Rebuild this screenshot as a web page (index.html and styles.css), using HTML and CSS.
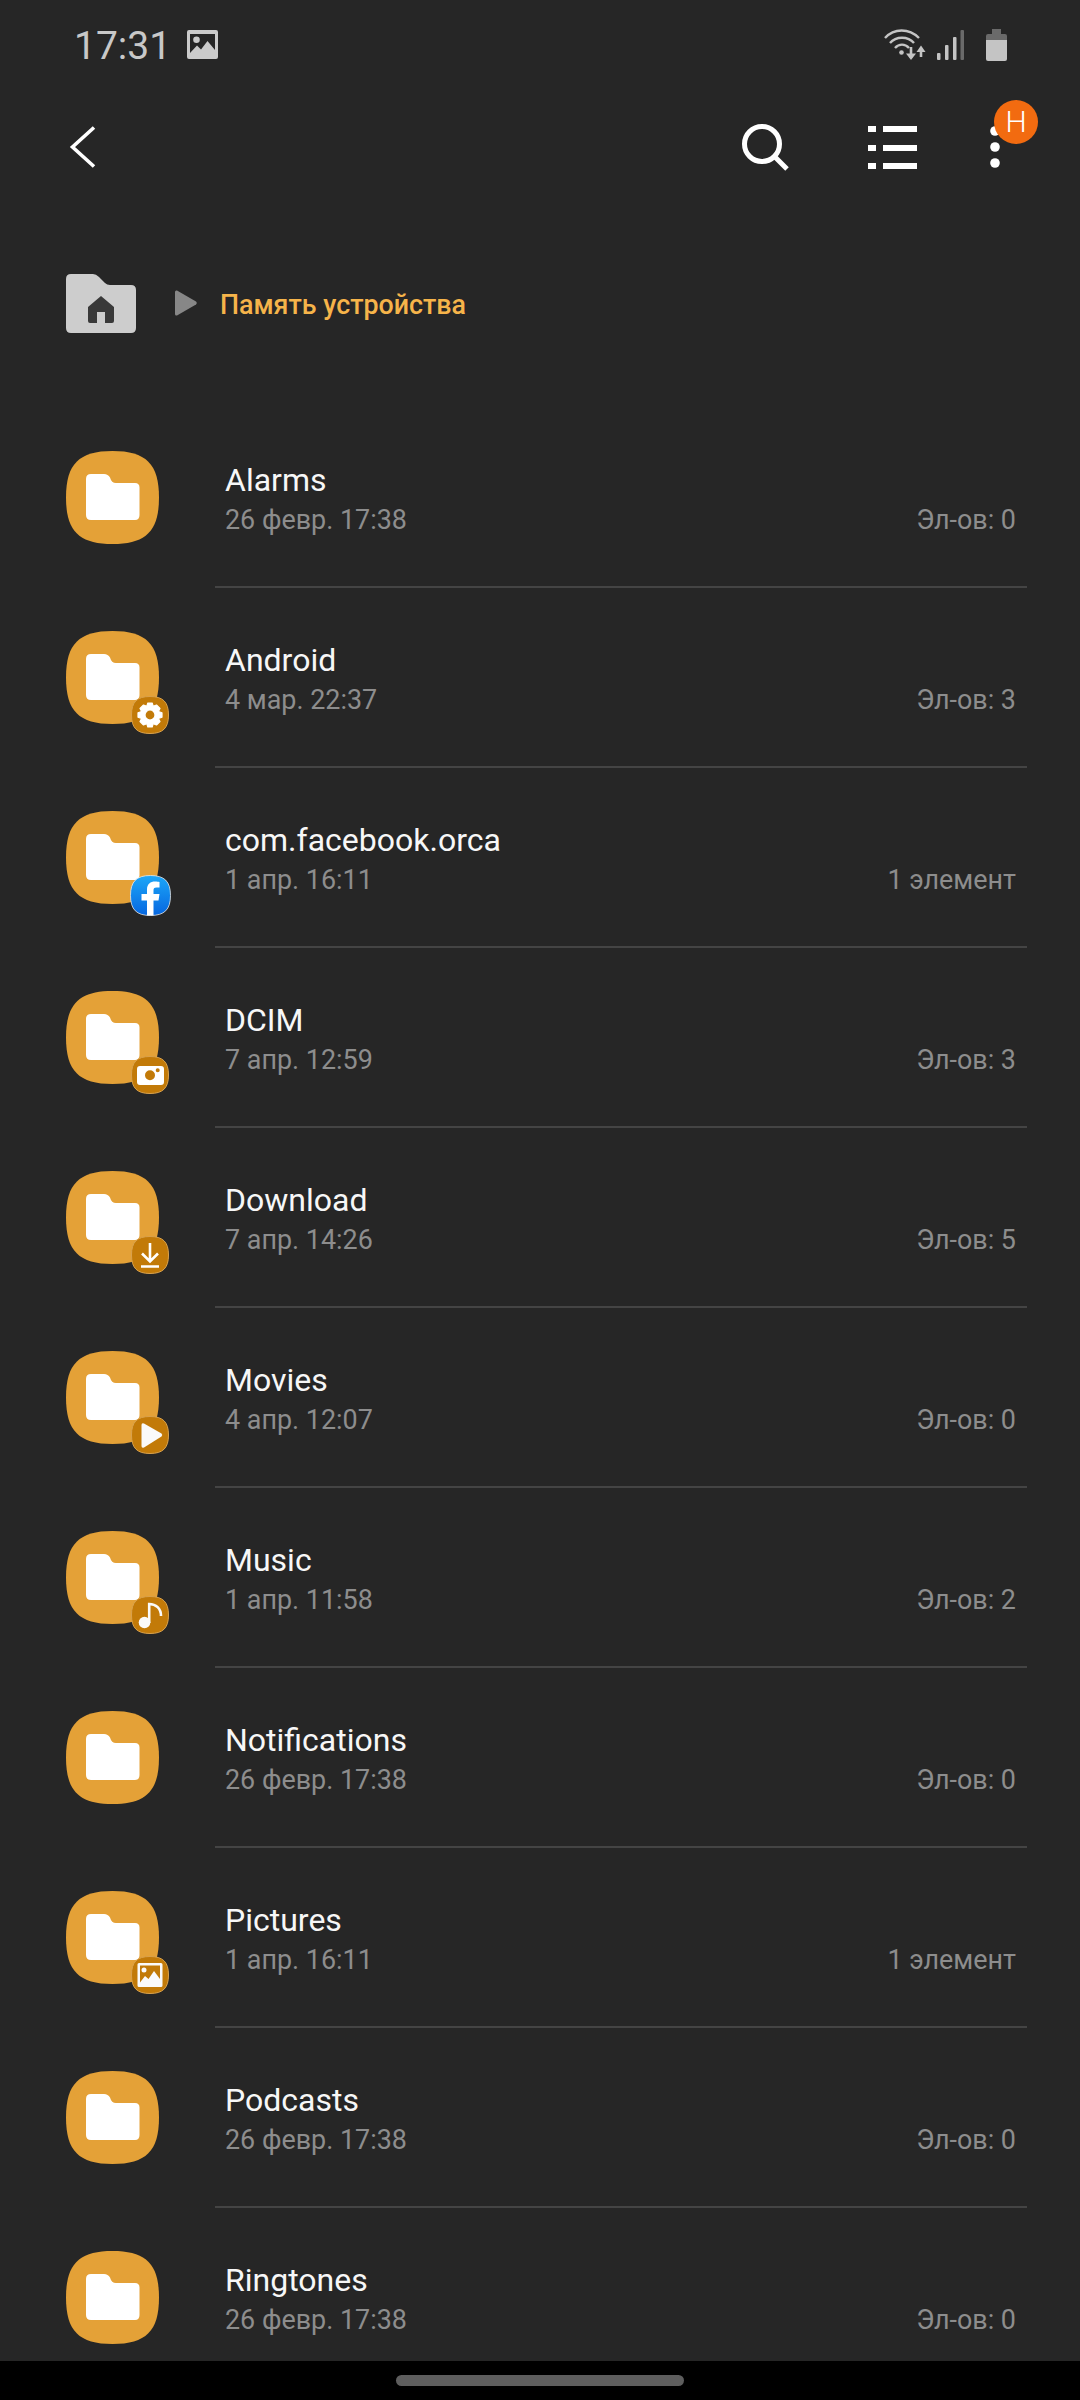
FILE: index.html
```html
<!DOCTYPE html>
<html lang="ru">
<head>
<meta charset="utf-8">
<title>Память устройства</title>
<link rel="stylesheet" href="styles.css">
</head>
<body>
<svg class="defs" width="0" height="0" aria-hidden="true">
  <symbol id="folder" viewBox="0 0 93 93">
    <path fill="#e4a137" d="M46.500 0C80 0 93 13 93 46.500C93 80 80 93 46.500 93C13 93 0 80 0 46.500C0 13 13 0 46.500 0Z"/>
    <path fill="#fff" d="M25 23H38Q42 23 44 26.500Q45.500 32 50 32H69Q73.500 32 73.500 36.500V64Q73.500 69 69 69H25Q20 69 20 64V28Q20 23 25 23Z"/>
  </symbol>
  <symbol id="chip" viewBox="0 0 38 38">
    <path fill="#c27a08" stroke="#d9a24e" stroke-width="1" d="M19 .5C32 .5 37.500 6 37.500 19C37.500 32 32 37.500 19 37.500C6 37.500 .5 32 .5 19C.5 6 6 .5 19 .5Z"/>
  </symbol>
</svg>
<div class="page">
  <header class="status">
    <span class="time">17:31</span>
    <svg class="st-img" viewBox="0 0 31 29"><path fill="#cbcbcb" fill-rule="evenodd" d="M2 0H29Q31 0 31 2V27Q31 29 29 29H2Q0 29 0 27V2Q0 0 2 0ZM9.500 6.500A3.300 3.300 0 1 0 9.500 13.100A3.300 3.300 0 1 0 9.500 6.500ZM3 23L10 15.500L14 19.500L20.500 11L28 20V4H3Z"/></svg>
    <span class="st-right">
      <svg class="st-wifi" viewBox="0 0 42 32" fill="none" stroke="#c4c4c4">
        <path stroke-width="2.400" d="M1 9C10 -1 25 -1 35 9"/>
        <path stroke-width="2.400" d="M6 14C12 7 24 7 30 14"/>
        <path stroke-width="2.400" d="M11 19C15 14.500 21 14.500 25 19"/>
        <circle cx="17.500" cy="23.500" r="2.300" fill="#c4c4c4" stroke="none"/>
        <path stroke-width="2.600" d="M27 18V29"/>
        <path fill="#c4c4c4" stroke="none" d="M22 24.500H32L27 31Z"/>
        <path stroke-width="2.600" d="M37 28V19"/>
        <path fill="#c4c4c4" stroke="none" d="M32.500 23H41.500L37 16.500Z"/>
      </svg>
      <svg class="st-signal" viewBox="0 0 27 30">
        <rect x="0" y="23" width="3.500" height="7" rx="1" fill="#c4c4c4"/>
        <rect x="8" y="15" width="3.500" height="15" rx="1" fill="#c4c4c4"/>
        <rect x="16" y="7" width="3.500" height="23" rx="1" fill="#c4c4c4"/>
        <rect x="23.500" y="0" width="3.500" height="30" rx="1" fill="#6a6a6a"/>
      </svg>
      <svg class="st-batt" viewBox="0 0 21 32">
        <path fill="#6a6a6a" d="M6 0H15V5H19Q21 5 21 7V11H0V7Q0 5 2 5H6Z"/>
        <path fill="#c4c4c4" d="M0 11H21V30Q21 32 19 32H2Q0 32 0 30Z"/>
      </svg>
    </span>
  </header>

  <nav class="toolbar">
    <svg class="tb-back" viewBox="0 0 30 46" fill="none" stroke="#fff" stroke-width="3.600"><path d="M26 3.500L4.500 23L26 42.500"/></svg>
    <svg class="tb-search" viewBox="0 0 48 48" fill="none" stroke="#fff" stroke-width="5"><circle cx="21" cy="21" r="17.500"/><path d="M33.500 33.500L46 46"/></svg>
    <svg class="tb-list" viewBox="0 0 49 44" fill="#fff">
      <rect x="0" y="1" width="8" height="6"/><rect x="15" y="1" width="34" height="6"/>
      <rect x="0" y="20" width="8" height="6"/><rect x="15" y="20" width="34" height="6"/>
      <rect x="0" y="38" width="8" height="6"/><rect x="15" y="38" width="34" height="6"/>
    </svg>
    <span class="tb-more">
      <svg class="tb-dots" viewBox="0 0 10 44" fill="#fff"><circle cx="5" cy="6" r="4.800"/><circle cx="5" cy="22" r="4.800"/><circle cx="5" cy="38" r="4.800"/></svg>
      <span class="tb-badge">Н</span>
    </span>
  </nav>

  <div class="crumbs">
    <svg class="crumb-home" viewBox="0 0 70 59"><path fill="#cdcdcd" d="M5 0H27Q30 0 33 3L39 9Q41 11 44 11H65Q70 11 70 16V54Q70 59 65 59H5Q0 59 0 54V5Q0 0 5 0Z"/><path fill="#393939" d="M35 22L48 33V47Q48 49 46 49H39V38H31V49H24Q22 49 22 47V33Z"/></svg>
    <svg class="crumb-arrow" viewBox="0 0 22 26"><path fill="#878787" d="M0 2Q0 0 2 .5L21 11.500Q22.500 13 21 14.500L2 25.500Q0 26 0 24Z"/></svg>
    <span class="crumb-text">Память устройства</span>
  </div>

  <main class="list">
    <div class="row">
      <span class="icon"><svg class="icon-folder"><use href="#folder"/></svg></span>
      <div class="body"><div class="name">Alarms</div><div class="sub"><span>26 февр. 17:38</span><span>Эл-ов: 0</span></div></div>
    </div>
    <div class="row">
      <span class="icon"><svg class="icon-folder"><use href="#folder"/></svg>
        <svg class="chip" viewBox="0 0 38 38"><use href="#chip"/><path fill="#fff" stroke="#fff" stroke-width="1.200" stroke-linejoin="round" fill-rule="evenodd" d="M16.800 7H21.200L22.200 10.300L25.500 9L29 12.500L27.400 15.500L31 16.800V21.200L27.400 22.500L29 25.500L25.500 29L22.200 27.700L21.200 31H16.800L15.800 27.700L12.500 29L9 25.500L10.600 22.500L7 21.200V16.800L10.600 15.500L9 12.500L12.500 9L15.800 10.300ZM19 14A5 5 0 1 0 19 24A5 5 0 1 0 19 14Z"/></svg>
      </span>
      <div class="body"><div class="name">Android</div><div class="sub"><span>4 мар. 22:37</span><span>Эл-ов: 3</span></div></div>
    </div>
    <div class="row">
      <span class="icon"><svg class="icon-folder"><use href="#folder"/></svg>
        <svg class="chip chip-fb" viewBox="0 0 41 41"><defs><linearGradient id="fb" x1="0" y1="0" x2="0" y2="1"><stop offset="0" stop-color="#1ca7f8"/><stop offset="1" stop-color="#0666e0"/></linearGradient></defs><path fill="url(#fb)" stroke="#e8e8e8" stroke-width=".8" d="M20.500.5C34.500.5 40.500 6.500 40.500 20.500C40.500 34.500 34.500 40.500 20.500 40.500C6.500 40.500 .5 34.500 .5 20.500C.5 6.500 6.500.5 20.500.5Z"/><path fill="#fff" d="M17 40.500V25.500H11.500V19H17V14.500C17 9 20.500 6.500 25 6.500C27 6.500 28.500 6.800 29.500 7V12.500H26.500C24 12.500 23.500 13.500 23.500 15.500V19H29.500L28.500 25.500H23.500V40.500Z"/></svg>
      </span>
      <div class="body"><div class="name">com.facebook.orca</div><div class="sub"><span>1 апр. 16:11</span><span>1 элемент</span></div></div>
    </div>
    <div class="row">
      <span class="icon"><svg class="icon-folder"><use href="#folder"/></svg>
        <svg class="chip" viewBox="0 0 38 38"><use href="#chip"/><path fill="#fff" fill-rule="evenodd" d="M9 10H30Q33 10 33 13V26Q33 29 30 29H9Q6 29 6 26V13Q6 10 9 10ZM19 14.300A5 5 0 1 0 19 24.300A5 5 0 1 0 19 14.300ZM26.700 12.300A2 2 0 1 0 26.700 16.300A2 2 0 1 0 26.700 12.300Z"/></svg>
      </span>
      <div class="body"><div class="name">DCIM</div><div class="sub"><span>7 апр. 12:59</span><span>Эл-ов: 3</span></div></div>
    </div>
    <div class="row">
      <span class="icon"><svg class="icon-folder"><use href="#folder"/></svg>
        <svg class="chip" viewBox="0 0 38 38"><use href="#chip"/><path fill="none" stroke="#fff" stroke-width="2.600" d="M19 7V25M11 17.500L19 25.500L27 17.500M10 30.500H28"/></svg>
      </span>
      <div class="body"><div class="name">Download</div><div class="sub"><span>7 апр. 14:26</span><span>Эл-ов: 5</span></div></div>
    </div>
    <div class="row">
      <span class="icon"><svg class="icon-folder"><use href="#folder"/></svg>
        <svg class="chip" viewBox="0 0 38 38"><use href="#chip"/><path fill="#fafafa" d="M10.500 9Q10.500 6.500 13 7.500L30.500 17.500Q32 19 30.500 20.500L13 31.500Q10.500 32.500 10.500 30Z"/></svg>
      </span>
      <div class="body"><div class="name">Movies</div><div class="sub"><span>4 апр. 12:07</span><span>Эл-ов: 0</span></div></div>
    </div>
    <div class="row">
      <span class="icon"><svg class="icon-folder"><use href="#folder"/></svg>
        <svg class="chip" viewBox="0 0 38 38"><use href="#chip"/><circle cx="13.500" cy="26.500" r="5.800" fill="#fafafa"/><path fill="none" stroke="#fafafa" stroke-width="2.600" d="M18.200 27V8C25 8 30 12.500 30 20"/></svg>
      </span>
      <div class="body"><div class="name">Music</div><div class="sub"><span>1 апр. 11:58</span><span>Эл-ов: 2</span></div></div>
    </div>
    <div class="row">
      <span class="icon"><svg class="icon-folder"><use href="#folder"/></svg></span>
      <div class="body"><div class="name">Notifications</div><div class="sub"><span>26 февр. 17:38</span><span>Эл-ов: 0</span></div></div>
    </div>
    <div class="row">
      <span class="icon"><svg class="icon-folder"><use href="#folder"/></svg>
        <svg class="chip" viewBox="0 0 38 38"><use href="#chip"/><path fill="#fafafa" fill-rule="evenodd" d="M8 7H30Q31.500 7 31.500 8.500V29.500Q31.500 31 30 31H8Q6.500 31 6.500 29.500V8.500Q6.500 7 8 7ZM13 11.500A2.500 2.500 0 1 0 13 16.500A2.500 2.500 0 1 0 13 11.500ZM9 26.500L14 20L17.500 23L23 15L29 23V9.500H9Z"/></svg>
      </span>
      <div class="body"><div class="name">Pictures</div><div class="sub"><span>1 апр. 16:11</span><span>1 элемент</span></div></div>
    </div>
    <div class="row">
      <span class="icon"><svg class="icon-folder"><use href="#folder"/></svg></span>
      <div class="body"><div class="name">Podcasts</div><div class="sub"><span>26 февр. 17:38</span><span>Эл-ов: 0</span></div></div>
    </div>
    <div class="row">
      <span class="icon"><svg class="icon-folder"><use href="#folder"/></svg></span>
      <div class="body"><div class="name">Ringtones</div><div class="sub"><span>26 февр. 17:38</span><span>Эл-ов: 0</span></div></div>
    </div>
  </main>

  <footer class="navbar"><span class="handle"></span></footer>
</div>
</body>
</html>
```

FILE: styles.css
```css
* { box-sizing: border-box; }
html, body { margin: 0; padding: 0; }
body { background: #262626; font-family: Roboto, "Noto Sans", sans-serif; color: #f5f5f5; }
svg { display: block; flex: none; }
.defs { position: absolute; }
.page { width: 1080px; height: 2400px; display: flex; flex-direction: column; overflow: hidden; }

.status { height: 92px; flex: none; display: flex; align-items: center; padding: 0 73px 0 74px; }
.time { font-size: 39px; color: #c8c8c8; line-height: 1; }
.st-img { width: 31px; height: 29px; margin-left: 16px; margin-top: -3px; }
.st-right { margin-left: auto; display: flex; align-items: center; margin-top: -3px; }
.st-wifi { width: 42px; height: 32px; }
.st-signal { width: 27px; height: 30px; margin-left: 11px; }
.st-batt { width: 21px; height: 32px; margin-left: 22px; }

.toolbar { height: 110px; flex: none; display: flex; align-items: center; padding: 0 80px 0 68px; }
.tb-back { width: 30px; height: 46px; }
.tb-search { width: 48px; height: 48px; margin-left: auto; }
.tb-list { width: 49px; height: 44px; margin-left: 79px; }
.tb-more { position: relative; width: 10px; height: 44px; margin-left: 73px; }
.tb-dots { width: 10px; height: 44px; }
.tb-badge { position: absolute; left: 4px; top: -25px; width: 44px; height: 44px; border-radius: 50%; background: #f26b10; color: #fff; font-size: 30px; font-weight: 300; line-height: 44px; text-align: center; }

.crumbs { height: 205px; flex: none; display: flex; align-items: center; padding: 0 0 1px 66px; }
.crumb-home { width: 70px; height: 59px; margin-bottom: 2px; }
.crumb-arrow { width: 22px; height: 26px; margin-left: 39px; margin-bottom: 2px; }
.crumb-text { margin-left: 23px; margin-top: 1px; font-size: 26.800px; font-weight: 500; color: #f6b44a; }

.list { flex: 1; min-height: 0; overflow: hidden; }
.row { height: 180px; display: flex; align-items: center; padding-left: 66px; }
.icon { position: relative; width: 93px; height: 93px; flex: none; }
.icon-folder { width: 93px; height: 93px; }
.chip { position: absolute; left: 65px; top: 65px; width: 38px; height: 38px; }
.chip-fb { left: 64px; top: 64px; width: 41px; height: 41px; }
.body { align-self: stretch; width: 812px; margin: 0 0 -1px 56px; padding: 6px 11px 0 10px; border-bottom: 2px solid #444; display: flex; flex-direction: column; justify-content: center; }
.name { font-size: 32px; line-height: 40px; color: #f7f7f7; }
.sub { display: flex; justify-content: space-between; font-size: 26.900px; line-height: 40px; color: #8d8d8d; }

.navbar { height: 39px; flex: none; background: #000; display: flex; justify-content: center; padding-top: 14px; }
.handle { width: 288px; height: 11px; border-radius: 6px; background: #5e5e5e; }
```
